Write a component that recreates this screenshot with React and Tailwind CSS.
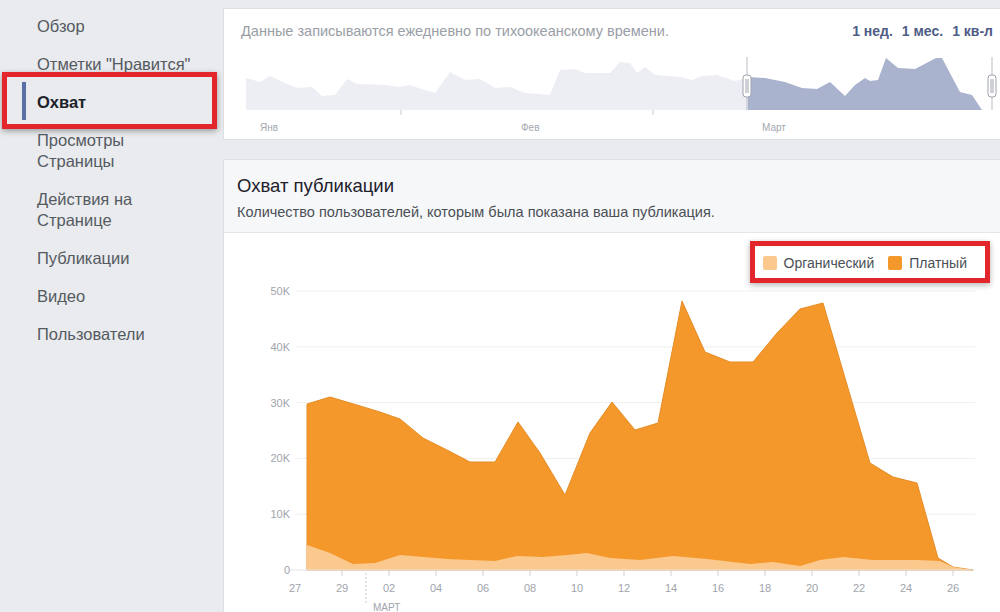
import React from "react";

const menu = [
  { label: "Обзор" },
  { label: 'Отметки "Нравится"' },
  { label: "Охват", active: true },
  { label: "Просмотры Страницы", lines: ["Просмотры", "Страницы"] },
  { label: "Действия на Странице", lines: ["Действия на", "Странице"] },
  { label: "Публикации" },
  { label: "Видео" },
  { label: "Пользователи" },
];

const toPoints = (pts) => pts.map(([x, y]) => `${x},${y}`).join(" ");

const miniAll = [
  [246, 110], [246, 78], [260, 82], [270, 76], [285, 83], [297, 88], [312, 87], [322, 96],
  [335, 95], [347, 79], [357, 84], [385, 85], [400, 87], [410, 85], [425, 90], [435, 93],
  [450, 72], [465, 80], [480, 79], [495, 88], [510, 87], [525, 93], [550, 95], [560, 70],
  [575, 69], [585, 73], [610, 73], [620, 62], [630, 63], [637, 73], [645, 67], [655, 75],
  [680, 77], [692, 80], [702, 76], [717, 75], [735, 81], [748, 78], [748, 110],
];

const miniSel = [
  [748, 110], [748, 77], [765, 78], [785, 82], [802, 88], [817, 89], [830, 82], [845, 96],
  [855, 85], [865, 78], [870, 81], [878, 80], [886, 58], [898, 68], [915, 69], [936, 58],
  [942, 58], [952, 77], [960, 92], [972, 95], [982, 110],
];

const paid = [
  [307, 570], [307, 404], [330, 397], [357, 405], [380, 412], [400, 419], [423, 438],
  [447, 450], [470, 462], [495, 462], [518, 422], [540, 453], [565, 495], [590, 433],
  [612, 402], [635, 430], [658, 423], [682, 301], [705, 352], [730, 362], [753, 362],
  [777, 333], [800, 309], [823, 303], [870, 463], [893, 477], [917, 483], [938, 558],
  [953, 567], [973, 570],
];

const organic = [
  [307, 570], [307, 545], [330, 553], [353, 564], [375, 563], [400, 555], [423, 557],
  [447, 559], [470, 560], [495, 561], [517, 556], [543, 557], [567, 555], [587, 553],
  [610, 558], [640, 560], [673, 556], [707, 559], [750, 564], [773, 562], [800, 566],
  [820, 560], [843, 557], [873, 560], [917, 560], [940, 561], [953, 567], [973, 570],
];

const yTicks = ["0", "10K", "20K", "30K", "40K", "50K"];
const xTicks = ["27", "29", "02", "04", "06", "08", "10", "12", "14", "16", "18", "20", "22", "24", "26"];

function Handle({ x }) {
  return (
    <g>
      <line x1={x} y1="57" x2={x} y2="110" stroke="#b9bdc6" strokeWidth="1" />
      <rect x={x - 4} y="75" width="8" height="22" rx="3" fill="#ffffff" stroke="#9ea3ad" />
      <line x1={x - 1} y1="79" x2={x - 1} y2="93" stroke="#9ea3ad" />
      <line x1={x + 1} y1="79" x2={x + 1} y2="93" stroke="#9ea3ad" />
    </g>
  );
}

function Sidebar() {
  return (
    <div className="flex w-[223px] shrink-0 flex-col gap-[17px] pt-[16px] text-[16.5px] leading-[21px] text-[#555a61]">
      {menu.map((item) => (
        <div key={item.label} className="relative pl-[37px]">
          {item.active && (
            <>
              <div className="absolute left-[22px] top-[-10px] h-[38px] w-[4px] bg-[#5a6fa5]" />
              <div className="absolute left-[2px] top-[-20px] h-[57px] w-[215px] border-[5px] border-[#e3262b] shadow-[0_2px_6px_rgba(0,0,0,0.35)]" />
            </>
          )}
          {item.lines ? (
            item.lines.map((l) => <div key={l}>{l}</div>)
          ) : (
            <div className={item.active ? "font-bold text-[#1d2129]" : ""}>{item.label}</div>
          )}
        </div>
      ))}
    </div>
  );
}

function RangeCard() {
  return (
    <div className="mt-[8px] h-[132px] w-[790px] border border-[#dddfe2] bg-white">
      <div className="flex items-center justify-between pl-[17px] pr-[19px] pt-[13px] text-[14.5px] leading-[18px]">
        <span className="text-[#9a9ea6]">
          Данные записываются ежедневно по тихоокеанскому времени.
        </span>
        <div className="flex gap-[9px] text-[14px] font-bold text-[#4e5d86]">
          <span>1 нед.</span>
          <span>1 мес.</span>
          <span>1 кв-л</span>
        </div>
      </div>
      <svg width="788" height="98" viewBox="224 40 788 98" className="block">
        <polygon points={toPoints(miniAll)} fill="#eceef4" />
        <polygon points={toPoints(miniSel)} fill="#a9b3cd" />
        <line x1="401" y1="110" x2="401" y2="115" stroke="#c8cbd1" />
        <line x1="653" y1="110" x2="653" y2="115" stroke="#c8cbd1" />
        <Handle x={747} />
        <Handle x={992} />
        <g fontSize="10" fill="#a4a8af">
          <text x="260" y="131">Янв</text>
          <text x="521" y="131">Фев</text>
          <text x="762" y="131">Март</text>
        </g>
      </svg>
    </div>
  );
}

function ReachCard() {
  return (
    <div className="mt-[19px] flex-1 w-[790px] border border-b-0 border-[#dddfe2] bg-white">
      <div className="h-[73px] border-b border-[#e5e6e9] bg-[#f6f7f9] pl-[13px] pt-[14px]">
        <div className="text-[18.5px] leading-[24px] text-[#1d2129]">Охват публикации</div>
        <div className="mt-[5px] text-[14.5px] leading-[18px] text-[#4b4f56]">
          Количество пользователей, которым была показана ваша публикация.
        </div>
      </div>
      <div className="flex justify-end pr-[45px] pt-[22px]">
        <div className="relative flex h-[16px] items-center gap-[7px] text-[14px] text-[#4b4f56]">
          <div className="absolute left-[-13px] top-[-14px] h-[42px] w-[240px] border-[5px] border-[#e3262b] shadow-[0_2px_6px_rgba(0,0,0,0.3)]" />
          <span className="h-[14px] w-[14px] rounded-[2px] bg-[#fbc98e]" />
          <span>Органический</span>
          <span className="ml-[7px] h-[14px] w-[14px] rounded-[2px] bg-[#f5982b]" />
          <span>Платный</span>
        </div>
      </div>
      <svg width="788" height="341" viewBox="224 271 788 341" className="block">
        {yTicks.map((t, i) => {
          const y = 570 - i * 55.8;
          return (
            <g key={t}>
              {i > 0 && <line x1="297" y1={y} x2="975" y2={y} stroke="#efefef" />}
              <text x="290" y={y + 4} textAnchor="end" fontSize="11" fill="#a0a4ab">
                {t}
              </text>
            </g>
          );
        })}
        <polygon points={toPoints(paid)} fill="#f5982b" stroke="#e58c26" strokeWidth="1" />
        <polygon points={toPoints(organic)} fill="#fbc98e" />
        <line x1="290" y1="570" x2="975" y2="570" stroke="#e4e4e4" />
        {xTicks.map((t, i) => {
          const x = 295 + i * 47;
          return (
            <g key={t}>
              {i > 0 && <line x1={x} y1="570" x2={x} y2="576" stroke="#cfd1d5" />}
              <text x={x} y="592" textAnchor="middle" fontSize="11" fill="#a0a4ab">
                {t}
              </text>
            </g>
          );
        })}
        <line x1="366" y1="573" x2="366" y2="605" stroke="#c3c6cc" strokeDasharray="2 2" />
        <text x="373" y="611" fontSize="10" fill="#a0a4ab">
          МАРТ
        </text>
      </svg>
    </div>
  );
}

export default function App() {
  return (
    <div className="flex h-[612px] w-[1000px] overflow-hidden bg-[#e9ebee] font-['Liberation_Sans',Arial,sans-serif]">
      <Sidebar />
      <div className="flex min-w-0 flex-1 flex-col">
        <RangeCard />
        <ReachCard />
      </div>
    </div>
  );
}
